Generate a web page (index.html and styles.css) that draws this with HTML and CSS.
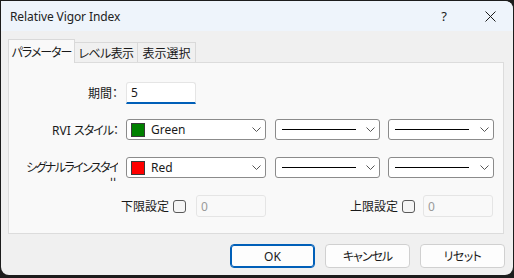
FILE: index.html
```html
<!DOCTYPE html>
<html lang="ja">
<head>
<meta charset="utf-8">
<title>Relative Vigor Index</title>
<link rel="stylesheet" href="styles.css">
</head>
<body>
<div class="window">
  <div class="titlebar">
    <div class="title">Relative Vigor Index</div>
    <div class="caption-btn help">?</div>
    <div class="caption-btn close">
      <svg width="11" height="11" viewBox="0 0 11 11"><path d="M0.5 0.5 L10.5 10.5 M10.5 0.5 L0.5 10.5" stroke="#1a1a1a" stroke-width="1" fill="none"/></svg>
    </div>
  </div>
  <div class="content">
    <div class="tabs">
      <div class="tab active t1"><span class="kana">パラメーター</span></div>
      <div class="tab t2"><span class="kana-s">レベル表示</span></div>
      <div class="tab t3">表示選択</div>
    </div>
    <div class="panel">
      <div class="row r1">
        <div class="label">期間：</div>
        <div class="input">5</div>
      </div>
      <div class="row r2">
        <div class="label">RVI <span class="kana">スタイル：</span></div>
        <div class="combo color-combo">
          <span class="swatch green"></span><span class="ctext">Green</span>
          <svg class="chev" width="9" height="5" viewBox="0 0 9 5"><path d="M0.5 0.5 L4.5 4.5 L8.5 0.5" stroke="#555" fill="none"/></svg>
        </div>
        <div class="combo line-combo w2">
          <span class="line"></span>
          <svg class="chev" width="9" height="5" viewBox="0 0 9 5"><path d="M0.5 0.5 L4.5 4.5 L8.5 0.5" stroke="#555" fill="none"/></svg>
        </div>
        <div class="combo line-combo w3">
          <span class="line"></span>
          <svg class="chev" width="9" height="5" viewBox="0 0 9 5"><path d="M0.5 0.5 L4.5 4.5 L8.5 0.5" stroke="#555" fill="none"/></svg>
        </div>
      </div>
      <div class="row r3">
        <div class="label wrap kana-l">シグナルラインスタイ<br>ル</div>
        <div class="combo color-combo">
          <span class="swatch red"></span><span class="ctext">Red</span>
          <svg class="chev" width="9" height="5" viewBox="0 0 9 5"><path d="M0.5 0.5 L4.5 4.5 L8.5 0.5" stroke="#555" fill="none"/></svg>
        </div>
        <div class="combo line-combo w2">
          <span class="line"></span>
          <svg class="chev" width="9" height="5" viewBox="0 0 9 5"><path d="M0.5 0.5 L4.5 4.5 L8.5 0.5" stroke="#555" fill="none"/></svg>
        </div>
        <div class="combo line-combo w3">
          <span class="line"></span>
          <svg class="chev" width="9" height="5" viewBox="0 0 9 5"><path d="M0.5 0.5 L4.5 4.5 L8.5 0.5" stroke="#555" fill="none"/></svg>
        </div>
      </div>
      <div class="row r4">
        <div class="group g1">
          <span class="glabel">下限設定</span>
          <span class="check"></span>
          <div class="input disabled">0</div>
        </div>
        <div class="group g2">
          <span class="glabel">上限設定</span>
          <span class="check"></span>
          <div class="input disabled">0</div>
        </div>
      </div>
    </div>
    <div class="buttons">
      <div class="btn default">OK</div>
      <div class="btn"><span class="kana">キャンセル</span></div>
      <div class="btn"><span class="kana-s">リセット</span></div>
    </div>
  </div>
</div>
</body>
</html>
```
FILE: styles.css
```css
html, body {
  margin: 0;
  padding: 0;
}
body {
  width: 514px;
  height: 278px;
  overflow: hidden;
  background: #1c1c1c;
  font-family: "Noto Sans", "Noto Sans CJK JP", sans-serif;
  font-size: 12px;
  color: #1a1a1a;
  font-feature-settings: "palt";
}
.kana { letter-spacing: -1px; }
.kana-s { letter-spacing: -0.6px; }
.kana-l { letter-spacing: -1.6px; }
.window {
  margin: 1px 0 0 1px;
  width: 512px;
  height: 274px;
  background: #f0f0f0;
  border-radius: 0 8px 8px 8px;
  overflow: hidden;
}
.titlebar {
  height: 30px;
  background: #eef4fb;
  display: flex;
  align-items: center;
}
.title {
  flex: 1;
  padding-left: 9px;
  font-size: 12px;
  letter-spacing: -0.1px;
  color: #222;
}
.caption-btn {
  width: 46px;
  height: 30px;
  display: flex;
  align-items: center;
  justify-content: center;
}
.help {
  font-size: 13px;
}
.content {
  padding: 8px 0 0 7px;
}
.tabs {
  display: flex;
  align-items: flex-end;
  height: 23px;
}
.tab {
  box-sizing: border-box;
  height: 20px;
  border: 1px solid #d9d9d9;
  border-bottom: none;
  background: #f0f0f0;
  display: flex;
  align-items: center;
  justify-content: center;
  margin-left: -1px;
  white-space: nowrap;
}
.tab.active {
  height: 24px;
  margin-left: 0;
  margin-bottom: -1px;
  background: #f9f9f9;
  position: relative;
  z-index: 1;
}
.t1 { width: 67px; }
.t2 { width: 64px; }
.t3 { width: 59px; }
.panel {
  box-sizing: border-box;
  width: 496px;
  height: 172px;
  border: 1px solid #dcdcdc;
  background: #f9f9f9;
  padding-top: 19px;
}
.row {
  display: flex;
  align-items: center;
}
.r1 { height: 22px; }
.r2 { height: 21px; margin-top: 15px; }
.r3 { height: 21px; margin-top: 17px; align-items: flex-start; }
.r4 { height: 22px; margin-top: 17px; }
.label {
  box-sizing: border-box;
  width: 109px;
  margin-right: 8px;
  text-align: right;
  white-space: nowrap;
}
.label.wrap {
  height: 24px;
  overflow: hidden;
  line-height: 15px;
  padding-top: 3px;
}
.input {
  box-sizing: border-box;
  width: 70px;
  height: 22px;
  background: #ffffff;
  border: 1px solid #e5e5e5;
  border-bottom: 2px solid #005fb8;
  border-radius: 3px 3px 0 0;
  padding-left: 4px;
  display: flex;
  align-items: center;
}
.input.disabled {
  background: #f9f9f9;
  border: 1px solid #e5e5e5;
  border-radius: 3px;
  color: #9a9a9a;
  width: 70px;
}
.combo {
  box-sizing: border-box;
  height: 21px;
  background: #ffffff;
  border: 1px solid #8b8b8b;
  border-radius: 3px;
  display: flex;
  align-items: center;
}
.color-combo {
  width: 140px;
  padding-left: 4px;
}
.w2 { width: 105px; margin-left: 9px; }
.w3 { width: 106px; margin-left: 8px; }
.swatch {
  box-sizing: border-box;
  width: 14px;
  height: 14px;
  border: 1px solid #3a3a3a;
}
.swatch.green { background: #008000; }
.swatch.red { background: #ff0000; }
.ctext {
  margin-left: 6px;
  flex: 1;
}
.chev {
  margin-right: 4px;
  margin-left: auto;
}
.line {
  width: 74px;
  height: 1px;
  background: #000;
  margin-left: 6px;
}
.group {
  display: flex;
  align-items: center;
  justify-content: flex-end;
}
.g1 { width: 257px; }
.g2 { width: 227px; }
.check {
  box-sizing: border-box;
  width: 13px;
  height: 13px;
  border: 1px solid #5a5a5a;
  border-radius: 3px;
  background: #f5f5f5;
  margin-left: 4px;
  margin-right: 10px;
}
.g2 .check { margin-right: 8px; }
.buttons {
  display: flex;
  justify-content: flex-end;
  gap: 10px;
  margin-top: 10px;
  padding-right: 8px;
}
.btn {
  box-sizing: border-box;
  width: 85px;
  height: 24px;
  background: #fdfdfd;
  border: 1px solid #d0d0d0;
  border-radius: 4px;
  display: flex;
  align-items: center;
  justify-content: center;
}
.btn.default {
  border: 1px solid #005fb8;
  box-shadow: inset 0 0 0 1px #005fb8;
}
```
